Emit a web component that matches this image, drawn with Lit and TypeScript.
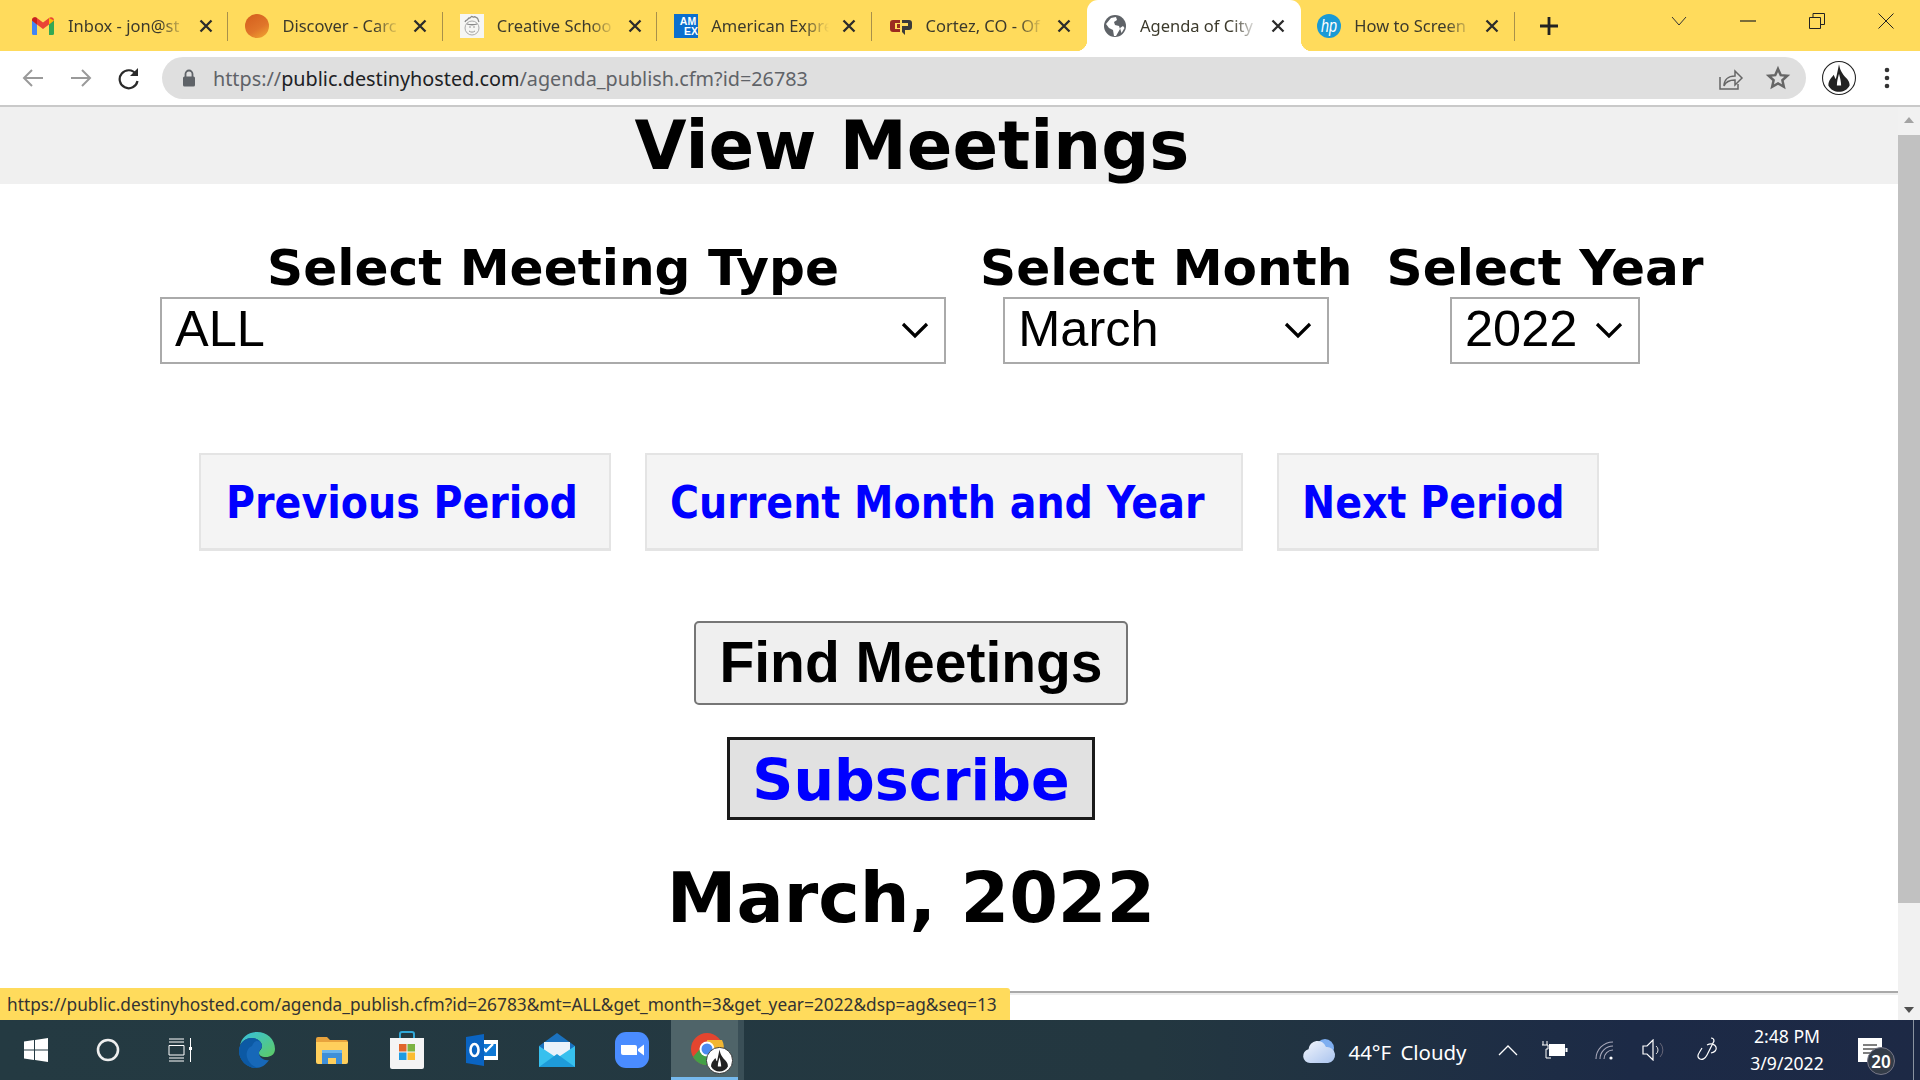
import { LitElement, html, css, svg, unsafeCSS } from "lit";
import { customElement } from "lit/decorators.js";

const chevronData = unsafeCSS(
  "url(\"data:image/svg+xml,%3Csvg xmlns='http://www.w3.org/2000/svg' width='28' height='17' viewBox='0 0 28 17'%3E%3Cpath d='M2 2l12 12L26 2' fill='none' stroke='%23000' stroke-width='3.2'/%3E%3C/svg%3E\")"
);

const gmail = svg`<svg class="fav" viewBox="0 0 24 24"><path d="M1 6v13.5A1.5 1.5 0 0 0 2.5 21H6V9z" fill="#4285f4"/><path d="M18 9v12h3.5a1.5 1.5 0 0 0 1.5-1.5V6z" fill="#34a853"/><path d="M1 6.5C1 3.5 4 2.5 6 4l6 4.5L18 4c2-1.5 5-.5 5 2.500L18 10.500 12 15 6 10.500z" fill="#ea4335"/><path d="M18 4l5 2.500 0 0-5 4z" fill="#fbbc04"/><path d="M1 6.500L6 10.500V4C4 2.500 1 3.500 1 6.500z" fill="#c5221f"/></svg>`;
const discover = svg`<svg class="fav" viewBox="0 0 24 24"><defs><linearGradient id="dg" x1="0.2" y1="0" x2="0.8" y2="1"><stop offset="0" stop-color="#d5601e"/><stop offset="0.6" stop-color="#e0752a"/><stop offset="1" stop-color="#f0a030"/></linearGradient></defs><circle cx="12" cy="12" r="12" fill="url(#dg)"/></svg>`;
const creative = svg`<svg class="fav" viewBox="0 0 24 24"><rect width="24" height="24" fill="#f6f6f4"/><circle cx="12" cy="14" r="7" fill="none" stroke="#aaa" stroke-width="1"/><path d="M5 8c1-3 2-1 3-3s2 0 3-2 2 1 3 0 2 1 3 1 1 2 2 4M7 10c2 1 8 1 10 0" fill="none" stroke="#888" stroke-width="1.3"/><path d="M9 13h2M13 13h2M9 17c2 1.500 4 1.500 6 0" stroke="#999" fill="none"/></svg>`;
const amex = svg`<svg class="fav" viewBox="0 0 24 24"><rect width="24" height="24" fill="#0b6fce"/><text x="14" y="11" font-family="Liberation Sans" font-weight="700" font-size="10.500" fill="#fff" text-anchor="middle">AM</text><text x="17" y="20.500" font-family="Liberation Sans" font-weight="700" font-size="10.500" fill="#fff" text-anchor="middle">EX</text></svg>`;
const cortez = svg`<svg class="fav" viewBox="0 0 24 24"><path d="M1 9q0-3 3-3h7v3H6v6h5v3H4q-3 0-3-3z" fill="#9b2a20"/><path d="M8 10h3v4H8z" fill="#9b2a20"/><path d="M13 6h7q3 0 3 3v4q0 3-3 3h-4v5l-3-3v-6h6V9h-6z" fill="#3a3a3a"/></svg>`;
const globe = svg`<svg class="fav" viewBox="0 0 24 24"><circle cx="12" cy="12" r="11" fill="#5f6368"/><path d="M3 10l5-6 5-1 1 3-3 2 1 3 4 1 1 3-4 7-2 0-1-6-4-2z" fill="#fff"/><path d="M17 14l3-2 1.500 2-3 5z" fill="#fff"/></svg>`;
const hp = svg`<svg class="fav" viewBox="0 0 24 24"><circle cx="12" cy="12" r="12" fill="#1a9ad6"/><text x="12" y="18" font-family="Liberation Sans" font-style="italic" font-weight="400" font-size="19" fill="#fff" text-anchor="middle" textLength="16" lengthAdjust="spacingAndGlyphs">hp</text></svg>`;

const tabs = [
  { t: "Inbox - jon@st", i: gmail },
  { t: "Discover - Carc", i: discover },
  { t: "Creative Schoo", i: creative },
  { t: "American Expre", i: amex },
  { t: "Cortez, CO - Of", i: cortez },
  { t: "Agenda of City", i: globe, active: true },
  { t: "How to Screen", i: hp },
];

const closeX = svg`<svg class="x" viewBox="0 0 14 14"><path d="M1.500 1.500l11 11M12.500 1.500l-11 11" stroke="#2b2b2b" stroke-width="2.300" fill="none"/></svg>`;

const avatar = (size: number) => svg`<svg width=${size} height=${size} viewBox="0 0 32 32"><circle cx="16" cy="16" r="15.500" fill="#fff" stroke="#222" stroke-width="1"/><path d="M16 3c1 5 2 7 5 11 3 3 5 5 5 9-2 4-6 6-10 6s-8-2-10-6c0-5 3-7 5-10 1 2 1 3 2 4 1-4 2-9 3-14z" fill="#222"/><path d="M16 12c-1 4-2 7-2 11h4c0-4-1-7-2-11z" fill="#fff"/></svg>`;

@customElement("app-root")
export class AppRoot extends LitElement {
  static styles = css`
    :host { display: block; width: 1920px; height: 1080px; overflow: hidden; position: relative; background: #fff; font-family: "Noto Sans", sans-serif; }
    .shell { display: flex; flex-direction: column; height: 1080px; }

    .tabbar { height: 51px; background: #ffdb5c; display: flex; flex: none; }
    .strip { display: flex; padding-left: 15px; }
    .tab { width: 214.400px; height: 51px; box-sizing: border-box; padding: 0 0 0 16px; display: flex; align-items: center; position: relative; }
    .tab.active { background: #fff; border-radius: 11px 11px 0 0; }
    .tab.active::before, .tab.active::after { content: ""; position: absolute; bottom: 0; width: 11px; height: 11px; }
    .tab.active::before { left: -11px; background: radial-gradient(circle at 0 0, transparent 11px, #fff 11.500px); }
    .tab.active::after { right: -11px; background: radial-gradient(circle at 100% 0, transparent 11px, #fff 11.500px); }
    .fav { width: 24px; height: 24px; flex: none; }
    .ttl { width: 118px; margin-left: 13px; font-size: 16.500px; white-space: nowrap; color: #3c3a2c;
      -webkit-mask-image: linear-gradient(90deg, #000 78%, transparent 100%); mask-image: linear-gradient(90deg, #000 78%, transparent 100%); flex: none; }
    .x { width: 14px; height: 14px; margin-left: 13px; flex: none; }
    .sep { position: absolute; right: 1px; top: 12px; height: 29px; width: 1px; background: #a8904a; }
    .newtab { width: 40px; margin-left: 13px; display: flex; align-items: center; justify-content: center; }
    .winbtns { margin-left: auto; display: flex; align-items: flex-start; }
    .winbtn { width: 69px; height: 42px; display: flex; align-items: center; justify-content: center; }

    .toolbar { height: 54px; flex: none; background: #fff; display: flex; align-items: flex-start; }
    .navs { display: flex; width: 162px; height: 48px; align-items: center; padding-left: 13px; box-sizing: border-box; gap: 8px; flex: none; margin-top: 3px; }
    .navs svg { width: 40px; height: 24px; }
    .omni { width: 1644px; height: 42px; margin-top: 6px; background: #dfdfdf; border-radius: 21px; display: flex; align-items: center; box-sizing: border-box; padding-left: 20px; flex: none; }
    .lock { width: 14px; height: 18px; flex: none; }
    .url { margin-left: 17px; font-size: 19.800px; color: #5f6368; white-space: nowrap; }
    .url b { font-weight: 400; color: #202124; }
    .omni-r { margin-left: auto; display: flex; gap: 20px; padding-right: 14px; align-items: center; }
    .omni-r svg { width: 28px; height: 28px; display: block; }
    .tb-r { display: flex; align-items: center; height: 42px; margin-top: 6px; padding-left: 16px; gap: 28px; }
    .tb-line { height: 2px; background: #c9c9c9; flex: none; }

    .viewport { flex: 1; display: flex; min-height: 0; }
    .page { flex: 1; min-width: 0; display: flex; flex-direction: column; }
    .band { height: 77px; box-sizing: border-box; padding: 8px 74px 0 0; background: #f0f0f0; flex: none; }
    h1 { margin: 0; text-align: center; font: 700 67.300px/63px "DejaVu Sans", sans-serif; color: #000; }
    .filters { display: flex; gap: 34px; padding: 53px 0 0 160px; align-items: flex-start; }
    .col { display: flex; flex-direction: column; align-items: center; }
    .col label { font: 700 50.200px/62px "DejaVu Sans", sans-serif; color: #000; white-space: nowrap; height: 60px; }
    select { appearance: none; -webkit-appearance: none; display: block; height: 67px; box-sizing: border-box; border: 2px solid #aaa; border-radius: 0; background: #fff ${chevronData} no-repeat right 15px center; font: 400 50.500px "Liberation Sans", sans-serif; color: #000; padding: 0 0 4px 13px; margin: 0; }
    .s1 { width: 786px; }
    .s2 { width: 326px; }
    .s3 { width: 190px; }

    .navrow { display: flex; gap: 34px; margin: 89px 0 0 199px; }
    .navbtn { height: 98px; box-sizing: border-box; background: #f4f4f4; border: 2px solid #e4e4e4; border-width: 2px 2px 3px 2px; padding-top: 2px; display: flex; align-items: center; font: 700 44px "DejaVu Sans Condensed", "DejaVu Sans", sans-serif; font-stretch: condensed; color: #0000ff; text-decoration: none; white-space: nowrap; }
    .n1 { width: 412px; padding-left: 25px; }
    .n2 { width: 598px; padding-left: 23px; }
    .n3 { width: 322px; padding-left: 23px; }

    .actions { display: flex; flex-direction: column; align-items: center; padding-right: 76px; }
    .find { margin-top: 70px; width: 434px; height: 84px; box-sizing: border-box; border: 2px solid #767676; border-radius: 5px; background: #efefef; font: 700 57px "Liberation Sans", sans-serif; color: #000; padding: 0 0 2px; }
    .sub { margin-top: 32px; width: 368px; height: 83px; box-sizing: border-box; border: 3px solid #1a1a1a; background: #e1e1e1; padding-top: 3px; display: flex; align-items: center; justify-content: center; font: 700 57px "DejaVu Sans", sans-serif; color: #0000ff; text-decoration: none; }
    h2 { margin: 40px 0 0; font: 700 70px/76px "DejaVu Sans", sans-serif; color: #000; text-align: center; }
    hr { margin: 55px 0 0; border: 0; height: 2px; background: #a9a9a9; box-shadow: 0 2px 0 #eee; flex: none; }

    .scroll { width: 22px; flex: none; background: #f1f1f1; display: flex; flex-direction: column; align-items: center; }
    .arrow { width: 0; height: 0; border-left: 5px solid transparent; border-right: 5px solid transparent; flex: none; }
    .arrow.up { border-bottom: 6px solid #a3a3a3; margin-top: 10px; }
    .arrow.down { border-top: 6px solid #505050; margin-top: auto; margin-bottom: 7px; }
    .thumb { width: 22px; height: 768px; background: #c1c1c1; margin-top: 12px; flex: none; }

    .status { position: absolute; left: 0; top: 988px; height: 32px; width: 1010px; background: #ffdb5c; border-radius: 0 3px 0 0; display: flex; align-items: center; padding-left: 7px; box-sizing: border-box; font-size: 17.300px; color: #333; white-space: nowrap; overflow: hidden; }

    .taskbar { height: 60px; flex: none; display: flex; align-items: stretch; background: linear-gradient(90deg, #243a42 0%, #233740 60%, #1c2a46 85%, #1d2945 100%); color: #fff; }
    .slot { width: 72px; display: flex; align-items: center; justify-content: center; flex: none; }
    .apps { display: flex; padding-left: 3px; }
    .app { width: 75px; display: flex; align-items: center; justify-content: center; flex: none; }
    .app.on { width: 67px; margin-left: 2px; padding: 8px 0 0 15px; background: #4f6469; border-bottom: 3px solid #76b9ed; box-sizing: border-box; }
    .peek { width: 6px; background: #3a4f57; flex: none; }
    .tray { margin-left: auto; display: flex; align-items: center; }
    .weather { display: flex; align-items: center; gap: 13px; font-size: 20.400px; white-space: nowrap; margin-right: 31px; }
    .weather span { word-spacing: 4px; padding-top: 3px; }
    .ti { display: flex; align-items: center; justify-content: center; flex: none; }
    .t-caret { width: 20px; }
    .t-batt { width: 26px; margin-left: 24.500px; }
    .t-wifi { width: 20px; margin-left: 27px; }
    .t-vol { width: 24px; margin-left: 27px; }
    .t-pen { width: 22px; margin-left: 30px; }
    .clock { width: 110px; display: flex; flex-direction: column; align-items: center; font-size: 17.600px; line-height: 27px; flex: none; margin: 0 3px 0 14px; }
    .notif { width: 75px; height: 60px; flex: none; position: relative; display: flex; align-items: center; padding-left: 13px; box-sizing: border-box; }
    .badge { position: absolute; left: 22px; top: 27px; width: 26px; height: 26px; border-radius: 50%; background: #333c48; border: 1px solid #778; display: flex; align-items: center; justify-content: center; font-size: 17px; font-weight: 600; color: #fff; }
    .edge { position: absolute; right: 6px; top: 0; width: 1px; height: 60px; background: #8a93a0; }
  `;

  render() {
    return html`
      <div class="shell">
        <div class="tabbar">
          <div class="strip">
            ${tabs.map((t, i) => html`<div class="tab ${t.active ? "active" : ""}">
              ${t.i}<span class="ttl">${t.t}</span>${closeX}
              ${!t.active && i !== 4 ? html`<span class="sep"></span>` : ""}
            </div>`)}
          </div>
          <div class="newtab"><svg width="20" height="20" viewBox="0 0 20 20"><path d="M10 1v18M1 10h18" stroke="#222" stroke-width="2.800"/></svg></div>
          <div class="winbtns">
            <div class="winbtn"><svg width="16" height="10" viewBox="0 0 16 10"><path d="M1 1l7 8 7-8" fill="none" stroke="#333" stroke-width="1"/></svg></div>
            <div class="winbtn"><svg width="16" height="2" viewBox="0 0 16 2"><path d="M0 1h16" stroke="#222" stroke-width="1.200"/></svg></div>
            <div class="winbtn"><svg width="16" height="16" viewBox="0 0 16 16"><path d="M.5 4.500h11v11H.5zM4 4.500V.5h11.500v11H11.500" fill="none" stroke="#222" stroke-width="1"/></svg></div>
            <div class="winbtn"><svg width="16" height="16" viewBox="0 0 16 16"><path d="M.5.5l15 15M15.500.5l-15 15" stroke="#222" stroke-width="1"/></svg></div>
          </div>
        </div>

        <div class="toolbar">
          <div class="navs">
            <svg viewBox="0 0 40 24"><path d="M30 12H11M19 4l-8 8 8 8" fill="none" stroke="#9a9a9a" stroke-width="2"/></svg>
            <svg viewBox="0 0 40 24"><path d="M10 12h19M21 4l8 8-8 8" fill="none" stroke="#9a9a9a" stroke-width="2"/></svg>
            <svg viewBox="0 0 40 24"><path d="M27 8a9 9 0 1 0 1.500 7" fill="none" stroke="#2a2a2a" stroke-width="2.200"/><path d="M29 2v8h-8z" fill="#2a2a2a"/></svg>
          </div>
          <div class="omni">
            <svg class="lock" viewBox="0 0 14 18"><path d="M3.500 8V5a3.500 3.500 0 0 1 7 0v3" fill="none" stroke="#5f6368" stroke-width="1.800"/><rect x="1" y="7.500" width="12" height="10" rx="1.500" fill="#5f6368"/></svg>
            <span class="url">https://<b>public.destinyhosted.com</b>/agenda_publish.cfm?id=26783</span>
            <div class="omni-r">
              <svg viewBox="0 0 28 28"><path d="M4 13v12h18v-5" fill="none" stroke="#666" stroke-width="1.500"/><path d="M8 22c0-6 4-10 11-10V7l7 7-7 7v-5c-5 0-9 1-11 6z" fill="none" stroke="#666" stroke-width="1.500"/></svg>
              <svg viewBox="-3 -3 34 34"><path d="M14 3l3.300 7.500 8 .8-6 5.400 1.800 8L14 20.500 6.900 24.700l1.800-8-6-5.400 8-.8z" fill="none" stroke="#666" stroke-width="3"/></svg>
            </div>
          </div>
          <div class="tb-r">
            ${avatar(34)}
            <svg width="6" height="22" viewBox="0 0 6 22"><circle cx="3" cy="3" r="2.300" fill="#333"/><circle cx="3" cy="11" r="2.300" fill="#333"/><circle cx="3" cy="19" r="2.300" fill="#333"/></svg>
          </div>
        </div>
        <div class="tb-line"></div>

        <div class="viewport">
          <div class="page">
            <div class="band"><h1>View Meetings</h1></div>
            <div class="filters">
              <div class="col"><label>Select Meeting Type</label>
                <select class="s1"><option>ALL</option></select></div>
              <div class="col"><label>Select Month</label>
                <select class="s2"><option>March</option></select></div>
              <div class="col"><label>Select Year</label>
                <select class="s3"><option>2022</option></select></div>
            </div>
            <div class="navrow">
              <a class="navbtn n1" href="#">Previous Period</a>
              <a class="navbtn n2" href="#">Current Month and Year</a>
              <a class="navbtn n3" href="#">Next Period</a>
            </div>
            <div class="actions">
              <button class="find">Find Meetings</button>
              <a class="sub" href="#">Subscribe</a>
              <h2>March, 2022</h2>
            </div>
            <hr />
          </div>
          <div class="scroll">
            <span class="arrow up"></span>
            <div class="thumb"></div>
            <span class="arrow down"></span>
          </div>
        </div>

        <div class="taskbar">
          <div class="slot"><svg width="24" height="24" viewBox="0 0 24 24"><path d="M0 3.500l10-1.400v9.300H0zM11 2l13-2v11.400H11zM0 12.500h10v9.400L0 20.500zM11 12.500h13V24l-13-2z" fill="#fff"/></svg></div>
          <div class="slot"><svg width="24" height="24" viewBox="0 0 24 24"><circle cx="12" cy="12" r="10" fill="none" stroke="#eee" stroke-width="2.600"/></svg></div>
          <div class="slot"><svg width="24" height="24" viewBox="0 0 24 24"><path d="M1 1h15M1 4h15M1 7.500h15v9.500H1zM1 20h15M1 23h15M22.500 0v9M22.500 12v12" fill="none" stroke="#fff" stroke-width="1"/><rect x="21" y="9" width="3" height="3" fill="#fff"/></svg></div>
          <div class="apps">
            <div class="app"><svg width="36" height="36" viewBox="0 0 36 36"><defs><linearGradient id="eg1" x1="0" y1="0" x2="1" y2="1"><stop offset="0" stop-color="#36c0e0"/><stop offset="1" stop-color="#5ecb62"/></linearGradient></defs><path d="M18 0c10 0 18 7 18 17 0 6-5 8-9 8-5 0-7-2-7-4 0-3 3-3 3-7 0-5-6-8-11-8C7 6 2 10 1 14 2 6 9 0 18 0z" fill="url(#eg1)"/><path d="M1 14c2-5 7-8 12-8 5 0 10 3 10 8 0 3-3 4-3 7 0 5 6 8 10 7-3 5-8 8-13 8C8 36 0 28 0 19c0-2 0-3 1-5z" fill="#1768b8"/><path d="M13 14c-5 2-7 8-4 14 2 4 6 7 10 8-9 1-19-6-19-17 0-8 7-13 13-13 5 0 8 4 8 4-3-2-6-1-8 4z" fill="#0c59a4"/></svg></div>
            <div class="app"><svg width="32" height="28" viewBox="0 0 32 28"><path d="M0 3q0-2 2-2h9l3 3h16q2 0 2 2v4H0z" fill="#e8a33d"/><path d="M0 6h32v20q0 2-2 2H2q-2 0-2-2z" fill="#ffcf5c"/><rect x="6" y="14" width="20" height="14" fill="#3f8fd9"/><rect x="12" y="22" width="8" height="6" fill="#ffcf5c"/><rect x="6" y="14" width="20" height="3" fill="#6cb5ee"/></svg></div>
            <div class="app"><svg width="34" height="38" viewBox="0 0 34 38"><path d="M10 7V3q0-2 2-2h10q2 0 2 2v4" fill="none" stroke="#32a8d8" stroke-width="2"/><path d="M0 7h34v29q0 2-2 2H2q-2 0-2-2z" fill="#f4f4f4"/><rect x="9" y="13" width="7.500" height="7.500" fill="#e0652b"/><rect x="17.500" y="13" width="7.500" height="7.500" fill="#7cb342"/><rect x="9" y="21.500" width="7.500" height="7.500" fill="#1e9ae0"/><rect x="17.500" y="21.500" width="7.500" height="7.500" fill="#fbbc30"/></svg></div>
            <div class="app"><svg width="32" height="32" viewBox="0 0 32 32"><rect x="12" y="6" width="20" height="20" fill="#fff"/><path d="M16 10h14v12H16z" fill="#0f78d4"/><path d="M17 14l3 3 7-7" fill="none" stroke="#fff" stroke-width="2.400"/><path d="M0 3l18-3v32L0 29z" fill="#0a64c2"/><ellipse cx="8.500" cy="16" rx="4" ry="6" fill="none" stroke="#fff" stroke-width="2.600"/></svg></div>
            <div class="app"><svg width="36" height="34" viewBox="0 0 36 34"><path d="M0 13L18 0l18 13v21H0z" fill="#1b72bf"/><path d="M5 9h26v13L18 28 5 22z" fill="#eaf2fa"/><path d="M0 13l18 12 18-12v21H0z" fill="#37c0ee"/><path d="M0 34l18-13 18 13z" fill="#1e9bd9"/></svg></div>
            <div class="app"><svg width="34" height="36" viewBox="0 0 34 36"><rect width="34" height="36" rx="11" fill="#4a8cff"/><path d="M6 13h14q2 0 2 2v8H8q-2 0-2-2z" fill="#fff"/><path d="M23 17l6-4.500v11L23 19z" fill="#fff"/></svg></div>
            <div class="app on"><svg width="44" height="44" viewBox="0 0 44 44"><circle cx="17" cy="18" r="16" fill="#e3452f"/><path d="M3 26a16 16 0 0 0 16 8l7-13-16-3z" fill="#43a047"/><path d="M17 9h15a16 16 0 0 1-6 21l-8-12z" fill="#f2b632"/><circle cx="17" cy="18" r="7.500" fill="#fff"/><circle cx="17" cy="18" r="5.500" fill="#4a8bf0"/><g transform="translate(16 16)">${avatar(27)}</g></svg></div>
            <div class="peek"></div>
          </div>
          <div class="tray">
            <div class="weather">
              <svg width="34" height="28" viewBox="0 0 34 28"><defs><linearGradient id="cl" x1="0" y1="0" x2="1" y2="1"><stop offset="0" stop-color="#f4f7fd"/><stop offset="1" stop-color="#a9c3ee"/></linearGradient></defs><circle cx="23" cy="12" r="9" fill="#7eaef0"/><path d="M8 27a7 7 0 0 1-1.500-13.800A9 9 0 0 1 24 11a8 8 0 0 1 2 16z" fill="url(#cl)"/></svg>
              <span>44°F Cloudy</span>
            </div>
            <div class="ti t-caret"><svg width="20" height="12" viewBox="0 0 20 12"><path d="M1 11l9-9 9 9" fill="none" stroke="#fff" stroke-width="1.300"/></svg></div>
            <div class="ti t-batt"><svg width="26" height="18" viewBox="0 0 26 18"><path d="M1 0v4M5 0v4M0 4h6v4H4v9H9" fill="none" stroke="#fff"/><rect x="7" y="3" width="16" height="12" fill="#fff"/><rect x="23.500" y="7" width="2" height="4" fill="#fff"/></svg></div>
            <div class="ti t-wifi"><svg width="20" height="20" viewBox="0 0 20 20"><path d="M1 19A17 17 0 0 1 18 2M5 19A13 13 0 0 1 18 6M9 19a9 9 0 0 1 9-9" fill="none" stroke="#aab" stroke-width="1.100"/><circle cx="16" cy="18" r="1.600" fill="#fff"/></svg></div>
            <div class="ti t-vol"><svg width="24" height="22" viewBox="0 0 24 22"><path d="M1 7h4l6-6v20l-6-6H1z" fill="none" stroke="#fff" stroke-width="1.200"/><path d="M14 7a5 5 0 0 1 0 8" fill="none" stroke="#ddd"/><path d="M18 4a10 10 0 0 1 0 14" fill="none" stroke="#667"/></svg></div>
            <div class="ti t-pen"><svg width="22" height="26" viewBox="0 0 22 26"><path d="M15 1c2 0 3 1 3 3l-7 14c-2 4-5 5-7 4s-3-3-1-6l3-5M11 8c4-2 8-1 9 2s-1 5-5 6" fill="none" stroke="#fff" stroke-width="1.200"/></svg></div>
            <div class="clock"><span>2:48 PM</span><span>3/9/2022</span></div>
            <div class="notif">
              <svg width="24" height="24" viewBox="0 0 24 24"><path d="M0 0h24v24H0z" fill="#fff"/><path d="M5 7h14M5 11h14M5 15h14" stroke="#555" stroke-width="1.300"/></svg>
              <span class="badge">20</span>
              <span class="edge"></span>
            </div>
          </div>
        </div>
      </div>
      <div class="status">https://public.destinyhosted.com/agenda_publish.cfm?id=26783&amp;mt=ALL&amp;get_month=3&amp;get_year=2022&amp;dsp=ag&amp;seq=13</div>
    `;
  }
}
